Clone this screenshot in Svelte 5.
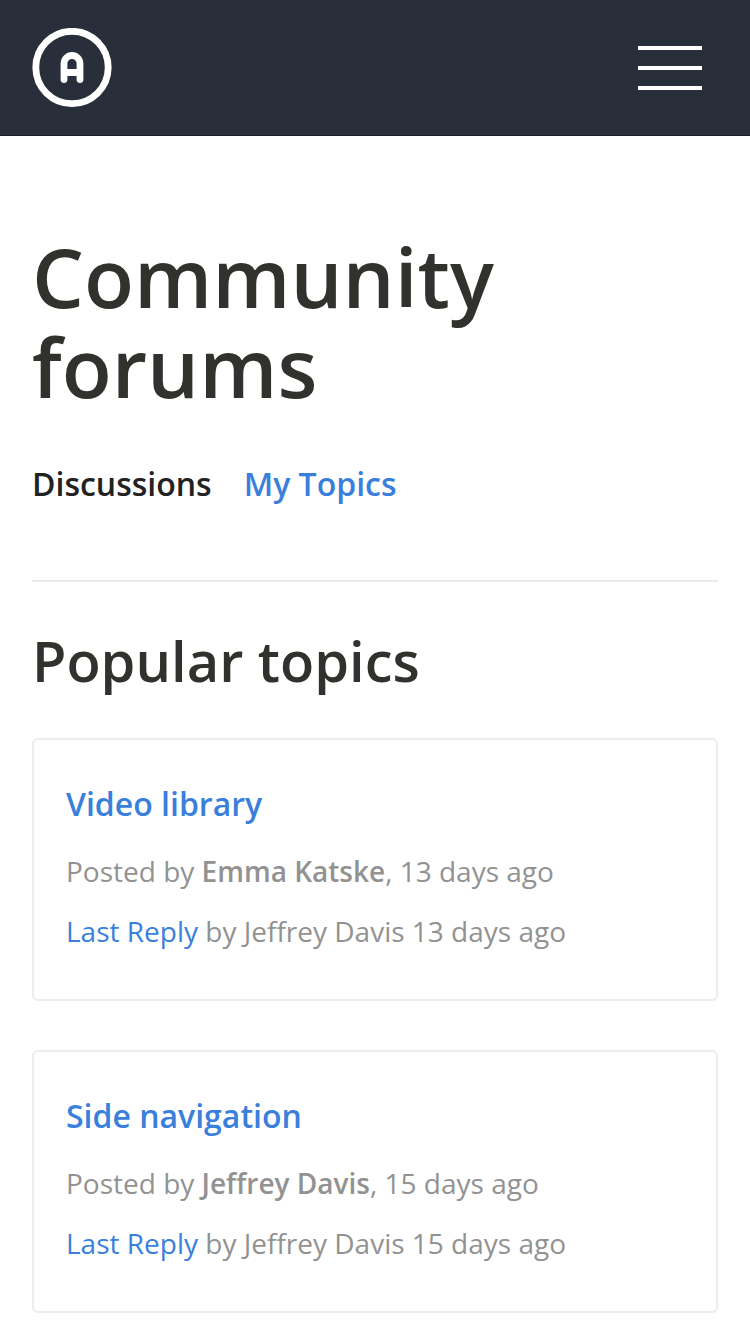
<script lang="ts">
  const topics = [
    { title: 'Video library', author: 'Emma Katske', replier: 'Jeffrey Davis', days: 13 },
    { title: 'Side navigation', author: 'Jeffrey Davis', replier: 'Jeffrey Davis', days: 15 },
  ];
</script>

<header>
  <a class="logo" href="#home" aria-label="Home">
    <svg width="80" height="80" viewBox="0 0 80 80" fill="none" stroke="#fff">
      <circle cx="40" cy="39.5" r="36.2" stroke-width="6.8" />
      <path d="M32 51.500V35.500a8 8 0 0 1 16 0V51.500M32 44.500h16" stroke-width="6.8" stroke-linecap="round" />
    </svg>
  </a>
  <button class="menu" aria-label="Menu">
    <span></span>
    <span></span>
    <span></span>
  </button>
</header>

<main>
  <h1>Community forums</h1>

  <nav>
    <a class="active" href="#discussions">Discussions</a>
    <a href="#my-topics">My Topics</a>
  </nav>

  <h2>Popular topics</h2>

  {#each topics as topic}
    <article>
      <h3><a href="#topic">{topic.title}</a></h3>
      <p>Posted by <b>{topic.author}</b>, {topic.days} days ago</p>
      <p><a href="#reply">Last Reply</a> by {topic.replier} {topic.days} days ago</p>
    </article>
  {/each}
</main>

<style>
  :global(body) {
    background: #fff;
    font-family: 'Open Sans', 'Noto Sans', sans-serif;
    color: #31312d;
  }

  header {
    display: flex;
    justify-content: space-between;
    align-items: center;
    box-sizing: border-box;
    height: 136px;
    padding: 1px 48px 0 32px;
    background: #282e3a;
    border-bottom: 1px solid #1b212c;
  }

  .logo, svg {
    display: block;
  }

  .menu {
    display: flex;
    flex-direction: column;
    gap: 16px;
    width: 64px;
    padding: 0;
    border: 0;
    background: none;
  }

  .menu span {
    height: 4px;
    background: #fff;
  }

  main {
    padding: 95px 32px 0;
  }

  h1, h2, h3, p {
    margin: 0;
  }

  h1 {
    width: 500px;
    font-size: 82px;
    font-weight: 600;
    line-height: 90px;
  }

  a {
    color: #3a7fdc;
    text-decoration: none;
  }

  nav {
    display: flex;
    gap: 32px;
    margin-top: 49px;
    padding-bottom: 72px;
    border-bottom: 2px solid #e8ebeb;
    font-size: 32px;
    font-weight: 600;
    line-height: 48px;
  }

  .active {
    color: #222;
  }

  h2 {
    margin: 43px 0;
    font-size: 56px;
    font-weight: 600;
    line-height: 70px;
  }

  article {
    box-sizing: border-box;
    height: 263px;
    margin-bottom: 49px;
    padding: 40px 32px;
    border: 2px solid #ebecec;
    border-radius: 6px;
  }

  h3 {
    margin-bottom: 13px;
    font-size: 32px;
    font-weight: 600;
    line-height: 48px;
  }

  p {
    color: #929292;
    font-size: 28px;
    line-height: 60px;
    white-space: nowrap;
  }

  b {
    font-weight: 600;
  }
</style>
